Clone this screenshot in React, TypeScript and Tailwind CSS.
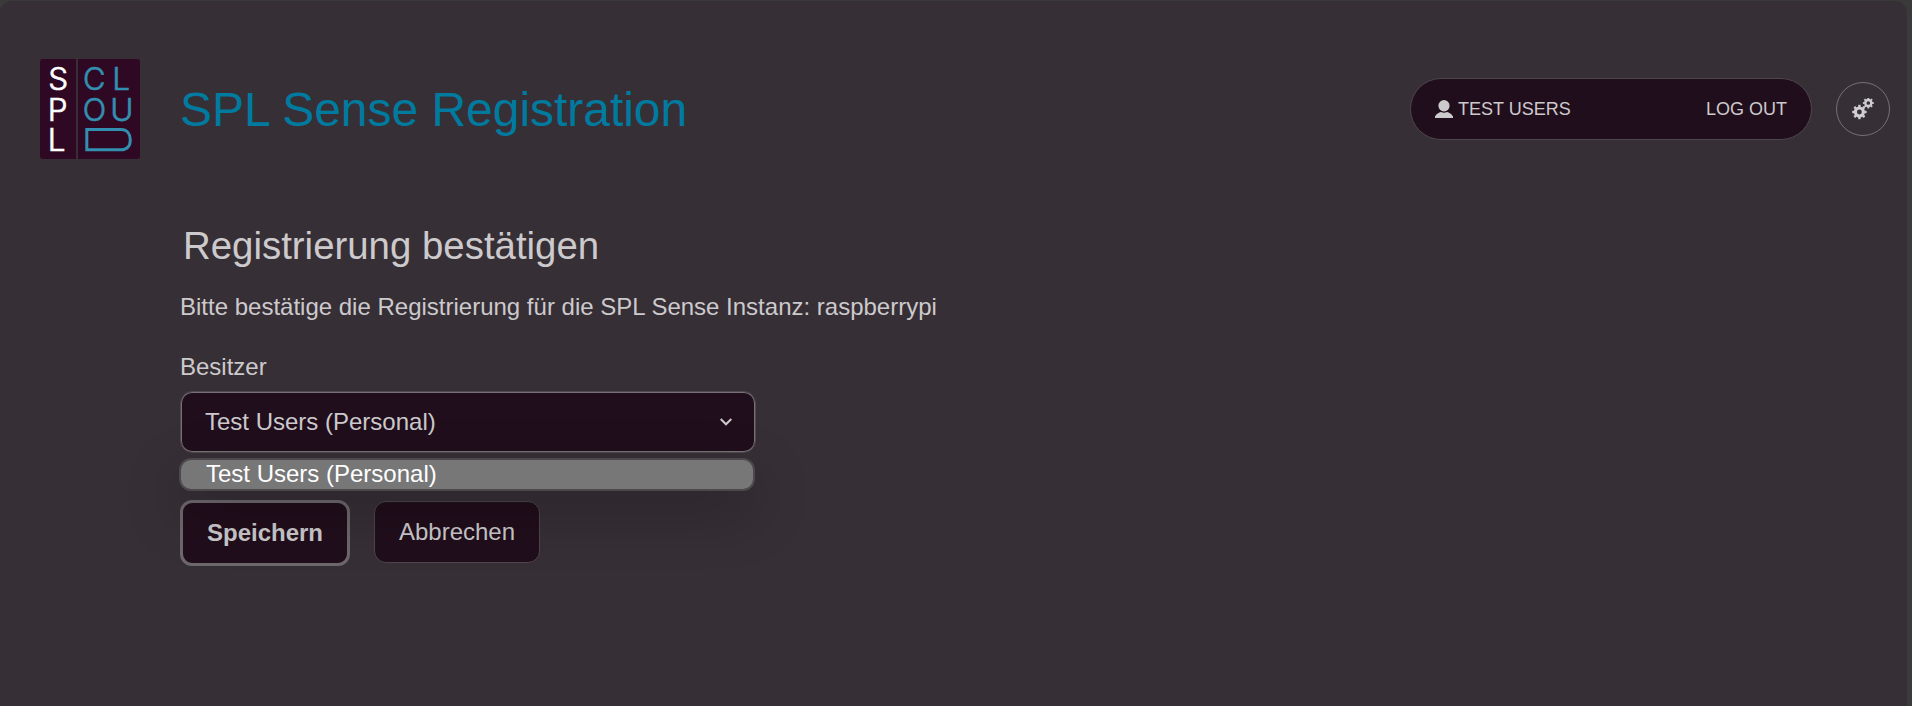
import type { ReactNode } from "react";

function Logo() {
  return (
    <svg
      viewBox="0 0 100 100"
      className="size-[100px] shrink-0 font-['Inter','Liberation_Sans',sans-serif] text-[31.5px] font-light"
      role="img"
    >
      <rect width="100" height="100" rx="3" fill="#2f0923" />
      <rect x="36" width="2" height="100" fill="#372f36" />
      <g fill="#ffffff" stroke="#ffffff" strokeWidth="0.7">
        <text x="8.3" y="30.8">S</text>
        <text x="7.7" y="61.7">P</text>
        <text x="7.7" y="92">L</text>
      </g>
      <g fill="#338fb0" stroke="#338fb0" strokeWidth="0.7">
        <text x="43" y="30.8" textLength="22.4" lengthAdjust="spacingAndGlyphs">C</text>
        <text x="72.2" y="30.8">L</text>
        <text x="42.7" y="61.7" textLength="23.4" lengthAdjust="spacingAndGlyphs">O</text>
        <text x="70.2" y="61.7">U</text>
      </g>
      <path d="M46.8 70.6H81C87 70.6 90.3 75 90.3 81S87 90.8 81 90.8H46.8Z" fill="none" stroke="#338fb0" strokeWidth="3" />
    </svg>
  );
}

function UserIcon() {
  return (
    <svg viewBox="0 0 18 18" className="h-[18px] w-[18px]" fill="currentColor">
      <ellipse cx="9" cy="5.7" rx="5.6" ry="5.7" />
      <path d="M0 18v-1.5C1.2 14.2 4 12.6 6 12.1c2 .7 4 .7 6 0 2 .5 4.8 2.1 6 4.4V18Z" />
    </svg>
  );
}

function Gear({ x, y, r, teeth }: { x: number; y: number; r: number; teeth: number }) {
  return (
    <g transform={`translate(${x} ${y})`} stroke="currentColor" fill="none">
      <circle r={r * 0.56} strokeWidth={r * 0.44} />
      {Array.from({ length: teeth }, (_, i) => (
        <path
          key={i}
          d={`M0 ${-r * 0.7}V${-r}`}
          strokeWidth={r * 0.34}
          transform={`rotate(${(i * 360) / teeth})`}
        />
      ))}
    </g>
  );
}

function GearsButton() {
  return (
    <button className="flex size-[54px] items-center justify-center rounded-full border border-[#767176] text-[#d0ced0]">
      <svg viewBox="0 0 22 22" className="size-[22px]">
        <Gear x={7.4} y={14} r={7.2} teeth={8} />
        <Gear x={16.3} y={5} r={5.4} teeth={8} />
      </svg>
    </button>
  );
}

function Header() {
  return (
    <header className="flex h-[100px] items-center">
      <Logo />
      <h1 className="ml-10 pt-[2px] text-[48px] leading-none tracking-[-0.03px] text-[#007a9e]">
        SPL Sense Registration
      </h1>
      <nav className="ml-auto flex h-[62px] w-[402px] items-center rounded-full border border-[#4e464c] bg-[#210e1c] px-6 text-[18px]">
        <UserIcon />
        <span className="ml-[5px]">TEST USERS</span>
        <span className="ml-auto">LOG OUT</span>
      </nav>
      <div className="ml-6 flex">
        <GearsButton />
      </div>
    </header>
  );
}

function OwnerSelect() {
  return (
    <div className="relative mt-[11px] w-[576px]">
      <div className="flex h-[62px] items-center justify-between rounded-xl border border-[#504a4f] bg-[#210e1c] pr-[23px] pb-px pl-6 inset-ring inset-ring-[#767176]">
        <span>Test Users (Personal)</span>
        <svg viewBox="0 0 12 8" className="h-[8px] w-[12px]" fill="none" stroke="currentColor" strokeWidth="2">
          <path d="M0.7 1 6 6.3 11.3 1" />
        </svg>
      </div>
      <ul className="absolute top-[67px] -left-px z-10 w-[576px] overflow-hidden rounded-xl border-2 border-[#4c484b] bg-[#777777] text-white shadow-[0_20px_56px_rgba(0,0,0,0.3)]">
        <li className="flex h-[29px] items-center pb-px pl-[25px]">Test Users (Personal)</li>
      </ul>
    </div>
  );
}

function Field({ label, children }: { label: string; children: ReactNode }) {
  return (
    <div className="mt-[33px]">
      <label className="block leading-[27px]">{label}</label>
      {children}
    </div>
  );
}

export default function App() {
  return (
    <div className="h-[706px] overflow-hidden bg-[#3a3a3a] pt-px pr-[5px] font-['Liberation_Sans',Arial,sans-serif] text-[#cccacc]">
      <div className="h-full rounded-t-xl bg-[#372f36] px-10 pt-[58px] pr-[17px]">
        <Header />
        <main className="ml-[140px] pt-[66px] text-[24px]">
          <h2 className="ml-[3px] text-[38.4px] leading-[42px]">Registrierung bestätigen</h2>
          <p className="mt-[26px] leading-[27px]">
            Bitte bestätige die Registrierung für die SPL Sense Instanz: raspberrypi
          </p>
          <Field label="Besitzer">
            <OwnerSelect />
          </Field>
          <div className="mt-[47px] flex items-start gap-6">
            <button className="h-[66px] w-[170px] rounded-xl border-3 border-[#6d686c] bg-[#210e1c] font-bold">
              Speichern
            </button>
            <button className="mt-px h-[62px] w-[166px] rounded-xl border border-[#4e464c] bg-[#210e1c]">
              Abbrechen
            </button>
          </div>
        </main>
      </div>
    </div>
  );
}
